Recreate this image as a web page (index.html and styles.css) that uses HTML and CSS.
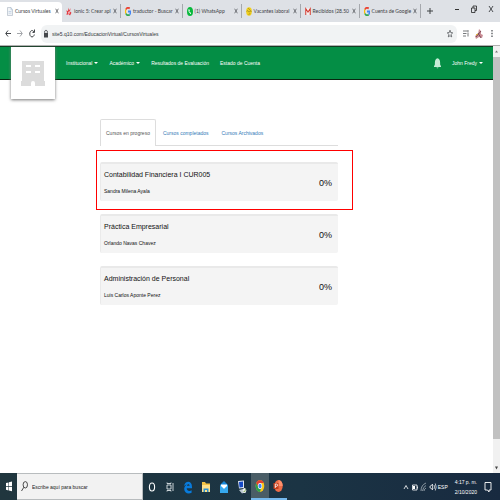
FILE: index.html
```html
<!DOCTYPE html>
<html lang="es">
<head>
<meta charset="utf-8">
<title>Cursos Virtuales</title>
<link rel="stylesheet" href="styles.css">
</head>
<body>
<svg class="defs" aria-hidden="true">
  <symbol id="google" viewBox="1 1 14 14" preserveAspectRatio="none">
    <g fill="none" stroke-width="3"><path stroke="#ea4335" d="M3 5A6 6 0 0 1 12 3.500"/><path stroke="#fbbc05" d="M3 5a6 6 0 0 0 0 6"/><path stroke="#34a853" d="M3 11a6 6 0 0 0 9 1.500"/><path stroke="#4285f4" d="M8 8h6c0 2-.7 3.500-2 4.500"/></g>
  </symbol>
  <symbol id="close" viewBox="0 0 6 8" preserveAspectRatio="none"><path d="M1 1l4 6M5 1l-4 6" fill="none" stroke="#4a4d51" stroke-width="1"/></symbol>
</svg>
<header class="browser">
  <div class="tabstrip">
    <div class="tab current"><svg class="fav" viewBox="0 0 12 16" preserveAspectRatio="none"><path d="M1 1h7l3 4v10H1z" fill="#f4f6f8" stroke="#9aa9b8"/><path d="M8 1v4h3M3 8h6M3 11h6" fill="none" stroke="#9fb9d5"/></svg><span class="name">Cursos Virtuales</span><button class="x" aria-label="Cerrar"><svg><use href="#close"/></svg></button></div>
    <div class="tab"><svg class="fav" viewBox="0 0 12 16" preserveAspectRatio="none"><path d="M4 1l2 5 3-4-1 6 3 2-3 5-3-2-4 1 1-5-2-3 4 1z" fill="#e23b42"/><path d="M4 9l4 2M7 7l-2 6" stroke="#fff"/></svg><span class="name">ionic 5: Crear apl</span><button class="x" aria-label="Cerrar"><svg><use href="#close"/></svg></button></div>
    <div class="tab"><svg class="fav"><use href="#google"/></svg><span class="name">traductor - Buscar</span><button class="x" aria-label="Cerrar"><svg><use href="#close"/></svg></button></div>
    <div class="tab"><svg class="fav" viewBox="0 0 12 16" preserveAspectRatio="none"><ellipse cx="6" cy="8" rx="6" ry="8" fill="#08b93c"/><path d="M4 4c-1 4 1 7 4 8M4 5l1 2M8 11l-2-1" stroke="#fff" stroke-width="1.500" fill="none"/></svg><span class="name">(1) WhatsApp</span><button class="x" aria-label="Cerrar"><svg><use href="#close"/></svg></button></div>
    <div class="tab"><svg class="fav" viewBox="0 0 16 16" preserveAspectRatio="none"><circle cx="8" cy="8" r="7.500" fill="#f1cf1b"/><path d="M2 8c3-5 5 4 8 0s3 0 4 1M6 2l4 3M7 14l4-3" stroke="#8b7a25" stroke-width="1.500" fill="none"/></svg><span class="name">Vacantes laboral</span><button class="x" aria-label="Cerrar"><svg><use href="#close"/></svg></button></div>
    <div class="tab"><svg class="fav" viewBox="0 0 12 16" preserveAspectRatio="none"><path d="M1 2h10v12H1z" fill="#f4eeee"/><path d="M1.500 14V3L6 9l4.500-6v11" fill="none" stroke="#d33a2f" stroke-width="2"/></svg><span class="name">Recibidos (28.50</span><button class="x" aria-label="Cerrar"><svg><use href="#close"/></svg></button></div>
    <div class="tab"><svg class="fav"><use href="#google"/></svg><span class="name">Cuenta de Google</span><button class="x" aria-label="Cerrar"><svg><use href="#close"/></svg></button></div>
    <button class="newtab" aria-label="Nueva pestaña"><svg viewBox="0 0 6 8"><path d="M3 1v6M0 4h6" stroke="#3c4043"/></svg></button>
    <div class="wincontrols">
      <button aria-label="Minimizar"><svg viewBox="0 0 6 8"><path d="M1 4.500h4" stroke="#333"/></svg></button>
      <button aria-label="Restaurar"><svg viewBox="0 0 6 8"><path d="M.5 3h3.500v4.500H.5zM2 3V1h3.500v4.500H4" fill="none" stroke="#222" stroke-width=".8"/></svg></button>
      <button aria-label="Cerrar ventana"><svg><use href="#close"/></svg></button>
    </div>
  </div>
  <div class="toolbar">
    <button aria-label="Atrás"><svg viewBox="0 0 6 8"><path d="M6 4H1M3 1L.7 4 3 7" fill="none" stroke="#45484c"/></svg></button>
    <button aria-label="Adelante"><svg viewBox="0 0 6 8"><path d="M0 4h5M3 1l2.300 3L3 7" fill="none" stroke="#a3a6aa"/></svg></button>
    <button aria-label="Recargar"><svg viewBox="0 0 6 8"><path d="M5 2.500A2.300 3.200 0 1 0 5.300 5M5.500 0v3H3.500" fill="none" stroke="#45484c"/></svg></button>
    <label class="address"><svg class="lock" viewBox="0 0 6 8"><path d="M1 3.500h4V8H1z" fill="#45484c"/><path d="M1.700 4V1.500Q3-.3 4.300 1.500V4" fill="none" stroke="#45484c" stroke-width=".8"/></svg><input type="text" aria-label="Dirección" value="site5.q10.com/EducacionVirtual/CursosVirtuales"><svg viewBox="0 0 6 8"><path d="M3 .7l.7 2.300 2 .2-1.500 1.800.5 2.400L3 6.200 1.300 7.400l.5-2.400L.3 3.200l2-.2z" fill="none" stroke="#45484c" stroke-width=".7"/></svg></label>
    <button aria-label="Lista"><svg viewBox="0 0 6 8"><path d="M0 1.500h4.500M0 4h3.500M0 6.500h3M5 3v4M4 1.500h2" stroke="#55585c" stroke-width=".8"/></svg></button>
    <button aria-label="Perfil"><svg class="avatar" viewBox="0 0 8 10"><path d="M4 0l2 2v3l2 1-1 3-3-1-3 2-1-3 3-2z" fill="#c98d95"/><path d="M1 8l5-6M3 4l3 5" stroke="#6b3947" stroke-width=".8"/><path d="M1 6l2-1" stroke="#d5a21b"/></svg></button>
    <button aria-label="Menú"><svg viewBox="0 0 6 8"><path d="M3 .5v1.500M3 3.300v1.500M3 6v1.500" stroke="#45484c" stroke-width="1.200"/></svg></button>
  </div>
</header>
<div class="viewport">
  <div class="page">
    <nav class="navbar">
      <a class="logo" href="#" aria-label="Inicio"><svg viewBox="0 0 24 25"><path fill="#dcdcdc" fill-rule="evenodd" d="M1 0h22v20h1v5H14v-3q0-2-2-2t-2 2v3H0v-5h1zM5 4v2h5V4zm9 0v2h5V4zM5 10v2h5v-2zm9 0v2h5v-2z"/></svg></a>
      <a href="#" class="drop">Institucional</a>
      <a href="#" class="drop">Académico</a>
      <a href="#">Resultados de Evaluación</a>
      <a href="#">Estado de Cuenta</a>
      <button class="bell" aria-label="Notificaciones"><svg viewBox="0 0 8 12"><path d="M4 0q3 1 3 5v2l1 2v1H0V9l1-2V5q0-4 3-5zM2.800 10.500h2.400q-1.200 2-2.400 0" fill="#c5ecd6"/></svg></button>
      <a href="#" class="drop">John Fredy</a>
    </nav>
    <main>
      <div class="coursetabs"><a href="#" class="active">Cursos en progreso</a><a href="#">Cursos completados</a><a href="#">Cursos Archivados</a></div>
      <div class="courses">
        <article class="course marked"><div><h2>Contabilidad Financiera I CUR005</h2><p>Sandra Milena Ayala</p></div><strong>0%</strong></article>
        <article class="course"><div><h2>Práctica Empresarial</h2><p>Orlando Navas Chavez</p></div><strong>0%</strong></article>
        <article class="course"><div><h2>Administración de Personal</h2><p>Luis Carlos Aponte Perez</p></div><strong>0%</strong></article>
      </div>
    </main>
  </div>
  <div class="scrollbar" aria-hidden="true"><svg viewBox="0 0 7 10"><path d="M2 6h3L3.500 4z" fill="#777"/></svg><span></span><svg viewBox="0 0 7 10"><path d="M2 4h3L3.500 7z" fill="#444"/></svg></div>
</div>
<footer class="taskbar">
  <button class="start" aria-label="Inicio"><svg viewBox="0 0 6 11"><path d="M0 2l2.500-.6V5H0zM3 1.200L6 .5V5H3zM0 5.700h2.500v3.700L0 8.800zM3 5.700h3v4.500l-3-.6z" fill="#fff"/></svg></button>
  <label class="search"><svg viewBox="0 0 7 11"><ellipse cx="4.300" cy="3.800" rx="2.200" ry="3.200" fill="none" stroke="#222" stroke-width=".8"/><path d="M2.800 6.300L.5 10" stroke="#222" stroke-width=".8"/></svg><input type="text" aria-label="Buscar" placeholder="Escribe aquí para buscar"></label>
  <div class="apps">
    <button aria-label="Cortana"><svg viewBox="0 0 10 14"><ellipse cx="5" cy="7" rx="2.600" ry="4" fill="none" stroke="#fff" stroke-width="1.100"/></svg></button>
    <button aria-label="Vista de tareas"><svg viewBox="0 0 10 14"><path d="M2 5h4v4H2zM2 2.500v1M6 2.500v1M2 3.500h4M2 11.500v-1h4v1M8 3v8" fill="none" stroke="#dce3e6" stroke-width=".9"/></svg></button>
    <button aria-label="Edge"><svg viewBox="0 0 10 14"><path d="M1 6C2 .5 9 0 9 7v1.300H3.700c.2 3 3 3.200 4.900 2v2.400C4.500 15 .6 12 1.300 8 1.700 6 3 5 4 4.500 2.800 4.700 1.800 5.200 1 6zm3-.2h2.600C6.500 3.800 4.200 3.800 4 5.800z" fill="#087bdc"/></svg></button>
    <button aria-label="Explorador"><svg viewBox="0 0 10 14"><path d="M1 2h3l1 1.500h4V12H1z" fill="#f5c344"/><path d="M1 5h8v7H1z" fill="#ffe08a"/><path d="M2.500 12V8.500h5V12H6v-2H4v2z" fill="#2d91d1"/></svg></button>
    <button aria-label="Correo"><svg viewBox="0 0 10 14"><path d="M1 5l4-4 4 4v8H1z" fill="#1687d9"/><path d="M2 4.500h6v2L5 9.500l-3-3z" fill="#fff"/><path d="M1 5l4 4 4-4v8H1z" fill="#36a9ef"/></svg></button>
    <button aria-label="Escritorio remoto"><svg viewBox="0 0 10 14"><path d="M1 1l6-.5V8L2 8.500z" fill="#dce5f5"/><path d="M2 2l4-.5V7l-3.500.5z" fill="#164bc7"/><path d="M2 10l4-1 3 3-4 1.500z" fill="#bbc8d1"/><ellipse cx="7.500" cy="10.500" rx="1.800" ry="2.500" fill="#eee"/><path d="M6.500 11l1 1 1.300-3" fill="none" stroke="#68a43c" stroke-width=".7"/></svg></button>
    <button class="running focused" aria-label="Chrome"><svg viewBox="0 0 10 14"><ellipse cx="5" cy="7" rx="4.300" ry="6" fill="#fbc719"/><path d="M1 4Q2.500 1 5 1t4 3H5L4 9z" fill="#e34133"/><path d="M1 4L4 9.500h2L5 13Q.7 12.500.7 7z" fill="#2aa14c"/><ellipse cx="5" cy="7" rx="2.100" ry="2.900" fill="#fff"/><ellipse cx="5" cy="7" rx="1.600" ry="2.300" fill="#4285f4"/></svg></button>
    <button class="running" aria-label="PowerPoint"><svg viewBox="0 0 10 14"><ellipse cx="5.500" cy="7" rx="4.200" ry="6" fill="#ed6c47"/><path d="M5.500 7V1q4 .5 4.200 6z" fill="#ff8f6b"/><path d="M.5 4h5v6h-5z" fill="#c43e1c"/><path d="M2.300 9V5h1q1.300 0 1.300 1.200T3.300 7.400h-1" fill="none" stroke="#fff" stroke-width=".8"/></svg></button>
  </div>
  <div class="tray">
    <svg viewBox="0 0 8 10"><path d="M2 7l2-3.500L6 7" fill="none" stroke="#fff" stroke-width=".8"/></svg>
    <svg viewBox="0 0 8 10"><path d="M1.500 3h4.500v5H1.500zM6.500 4.500v2" fill="none" stroke="#fff" stroke-width=".8"/><path d="M2 4h2v3H2z" fill="#fff"/></svg>
    <svg viewBox="0 0 8 10"><path d="M1 9Q1 3 6 1M2.500 9Q3 5 6 3.500M4 9q.2-2 2-3" fill="none" stroke="#b8c1c9" stroke-width=".7"/></svg>
    <svg viewBox="0 0 8 10"><path d="M1 4h1l1.500-2v6L2 6H1zM5 3q1 2 0 4M6.300 1.500q1.700 3.500 0 7" fill="none" stroke="#fff" stroke-width=".7"/></svg>
    <span>ESP</span>
    <div class="clock"><time>4:17 p. m.</time><time>2/10/2020</time></div>
    <svg class="note" viewBox="0 0 8 12"><path d="M1 1.500h6v7.500H5v2L3.500 9H1z" fill="none" stroke="#fff" stroke-width=".9"/></svg>
  </div>
</footer>
</body>
</html>
```
FILE: styles.css
```css
* { box-sizing: border-box; }
body {
  margin: 0;
  height: 100vh;
  display: flex;
  flex-direction: column;
  background: #fff;
  color: #111;
  font-family: "Liberation Sans", sans-serif;
  font-size: 5px;
  line-height: 10px;
}
button, input { font: inherit; color: inherit; border: 0; padding: 0; margin: 0; background: none; }
button { display: flex; align-items: center; justify-content: center; }
a { color: inherit; text-decoration: none; }
h2, p { margin: 0; font-weight: normal; }
svg { display: block; flex: none; }
.defs { position: absolute; width: 0; height: 0; }

.tabstrip { display: flex; height: 22px; background: #dee1e6; }
.tab {
  display: flex;
  align-items: center;
  flex: 0 1 59px;
  height: 14px;
  margin-top: 4px;
  padding: 0 3px 0 4px;
  gap: 2px;
  border-right: 1px solid #a5a8ad;
  color: #3c4043;
  font-family: Lato, sans-serif;
}
.tab.current {
  flex-basis: 62px;
  height: 20px;
  margin-top: 2px;
  padding: 0 3px 2px 7px;
  border: 0;
  border-radius: 0 4px 0 0;
  background: #fff;
}
.fav { width: 6px; height: 9px; }
.name { flex: 1; min-width: 0; white-space: nowrap; }
.x svg { width: 4px; height: 6px; }
.newtab { width: 18px; }
.newtab svg { width: 6px; height: 8px; }
.wincontrols { display: flex; align-items: center; margin-left: auto; padding: 0 6px 4px 0; gap: 11px; }
.wincontrols svg { width: 6px; height: 8px; }

.toolbar {
  display: flex;
  align-items: center;
  height: 24px;
  padding: 0 5px;
  gap: 6px;
  border-bottom: 1px solid #b1b1b1;
}
.toolbar svg { width: 6px; height: 9px; }
.toolbar .avatar { width: 8px; height: 10px; }
.address {
  flex: 1;
  display: flex;
  align-items: center;
  height: 18px;
  padding: 0 4px 0 2px;
  gap: 3px;
  border-radius: 6px;
  background: #f1f3f4;
}
.address input { flex: 1; min-width: 0; height: 12px; color: #33363a; outline: 0; }

.viewport { flex: 1; min-height: 0; display: flex; }
.page { flex: 1; min-width: 0; overflow: hidden; }
.scrollbar { width: 7px; display: flex; flex-direction: column; background: #f1f1f1; }
.scrollbar svg { width: 7px; height: 11px; }
.scrollbar span { flex: 1; background: #c1c1c1; }
.scrollbar svg:last-child { margin-top: 23px; }

.navbar {
  display: flex;
  align-items: center;
  height: 34px;
  padding: 0 10px 0 11px;
  gap: 11px;
  background: #048e45;
  border-top: 1px solid #123c22;
  border-bottom: 1px solid #07260f;
  color: #fff;
  white-space: nowrap;
}
.logo {
  position: relative;
  align-self: flex-start;
  display: flex;
  align-items: center;
  justify-content: center;
  width: 44px;
  height: 52px;
  background: #fff;
  box-shadow: 0 1px 3px #777;
}
.logo svg { width: 24px; height: 25px; }
.drop { display: flex; align-items: center; gap: 2px; }
.drop::after { content: ""; border: 2px solid transparent; border-top-color: #fff; border-bottom: 0; }
.bell { margin-left: auto; }
.bell svg { width: 7px; height: 11px; }

main { width: 238px; margin: 39px 0 0 100px; }
.coursetabs { display: flex; gap: 1px; border-bottom: 1px solid #ddd; color: #337ab7; white-space: nowrap; }
.coursetabs a { padding: 8px 5px; border: 1px solid transparent; border-bottom: 0; margin-bottom: -1px; }
.coursetabs .active { color: #555; background: #fff; border-color: #ddd; border-radius: 2px 2px 0 0; }
.courses { display: grid; gap: 13px; margin-top: 16px; }
.course {
  display: flex;
  align-items: center;
  justify-content: space-between;
  height: 39px;
  padding: 0 6px 0 3px;
  background: #f4f4f4;
  border-top: 2px solid #e9e9e9;
  border-left: 1px solid #eaeaea;
  border-radius: 2px;
  position: relative;
}
.course h2 { font-size: 7px; line-height: 16px; }
.course p { line-height: 16px; }
.course strong { font-size: 9px; font-weight: normal; }
.marked::after { content: ""; position: absolute; inset: -14px -15px -9px -5px; border: 1px solid #f00; }

.taskbar { display: flex; height: 27px; background: linear-gradient(90deg, #20363e, #1b3444 60%, #182a40); color: #fff; }
.start { width: 17px; }
.start svg { width: 6px; height: 11px; }
.search { width: 126px; display: flex; align-items: center; gap: 4px; padding-left: 4px; background: #f2f2f2; border: 1px solid #b8bcbe; border-left: 0; color: #222; }
.search svg { width: 7px; height: 11px; }
.search input { flex: 1; min-width: 0; outline: 0; }
.search input::placeholder { color: #222; opacity: 1; }
.apps { display: flex; }
.apps button { width: 18px; }
.apps svg { width: 10px; height: 14px; }
.apps .running { border-bottom: 2px solid #76b9ed; }
.apps .focused { background: #4a5d66; }
.tray { display: flex; align-items: center; margin-left: auto; padding-right: 8px; gap: 1px; }
.tray svg { width: 8px; height: 10px; }
.clock { display: flex; flex-direction: column; align-items: center; margin: 0 6px; }
.tray .note { height: 12px; }
```
